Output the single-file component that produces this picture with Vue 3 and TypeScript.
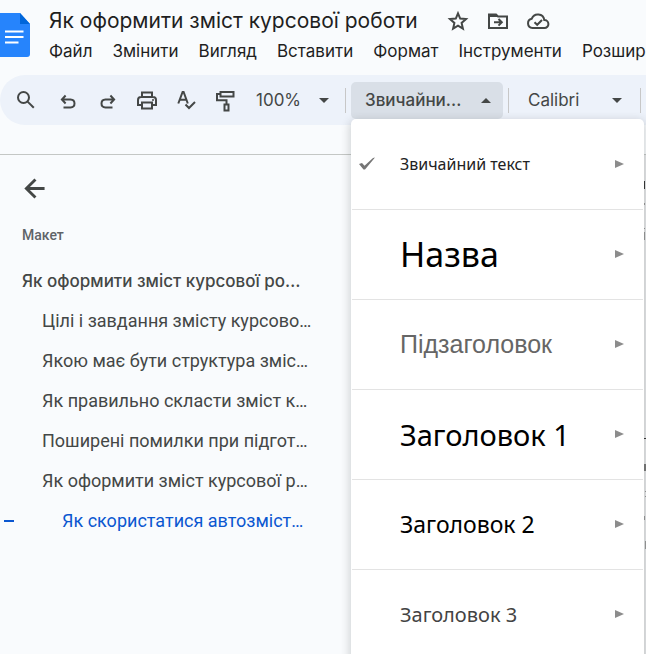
<script setup lang="ts">
import { ref } from 'vue'

interface StyleOption {
  label: string
  kind: string
}

interface OutlineItem {
  label: string
  level: number
  active?: boolean
}

const menuItems: string[] = ['Файл', 'Змінити', 'Вигляд', 'Вставити', 'Формат', 'Інструменти', 'Розширення']

const styleOptions: StyleOption[] = [
  { label: 'Звичайний текст', kind: 'normal' },
  { label: 'Назва', kind: 'title' },
  { label: 'Підзаголовок', kind: 'subtitle' },
  { label: 'Заголовок 1', kind: 'h1' },
  { label: 'Заголовок 2', kind: 'h2' },
  { label: 'Заголовок 3', kind: 'h3' },
]

const outline: OutlineItem[] = [
  { label: 'Як оформити зміст курсової ро…', level: 1 },
  { label: 'Цілі і завдання змісту курсово…', level: 2 },
  { label: 'Якою має бути структура зміс…', level: 2 },
  { label: 'Як правильно скласти зміст к…', level: 2 },
  { label: 'Поширені помилки при підгот…', level: 2 },
  { label: 'Як оформити зміст курсової р…', level: 2 },
  { label: 'Як скористатися автозміст…', level: 3, active: true },
]

const menuOpen = ref(true)
const selected = ref('normal')
</script>

<template>
  <div class="app">
    <header class="header">
      <svg class="logo" viewBox="0 0 31 44" aria-hidden="true">
        <path d="M-2 0H20L30 11V41Q30 44 27 44H-2Z" fill="#2684fc" />
        <path d="M20 0L30 11H20Z" fill="#0066da" />
        <path d="M5 18.500H23.500M5 24H23.500M5 29.500H18.500" stroke="#fff" stroke-width="2.200" />
      </svg>
      <div class="heading">
        <div class="title-row">
          <h1 class="doc-title">Як оформити зміст курсової роботи</h1>
          <button class="icon-button" aria-label="Позначити">
            <svg viewBox="0 0 24 24"><path d="M12 4.300l2.200 5.300 5.800.500-4.400 3.800 1.300 5.700-4.900-3-4.900 3 1.300-5.700-4.400-3.800 5.800-.500z" class="line" stroke-linejoin="miter" /></svg>
          </button>
          <button class="icon-button" aria-label="Перемістити">
            <svg viewBox="0 0 24 24"><path d="M3 5.500H10L12 7.500H21V19H3Z" class="line" /><path d="M3 5H10L12 8H3Z" fill="#444746" /><path d="M8 13.300H15.500M12.500 10L15.800 13.300L12.500 16.600" class="line" /></svg>
          </button>
          <button class="icon-button" aria-label="Стан документа">
            <svg viewBox="0 0 24 24"><path d="M6.500 19A4.700 4.700 0 0 1 5.800 9.700A6.500 6.500 0 0 1 18.300 11A4 4 0 0 1 18.500 19Z" class="line" /><path d="M8.500 13.200L11.200 15.800L16 11" class="line" /></svg>
          </button>
        </div>
        <nav class="menubar">
          <button v-for="item in menuItems" :key="item">{{ item }}</button>
        </nav>
      </div>
    </header>

    <div class="toolbar" role="toolbar">
      <div class="tools">
        <button class="icon-button" aria-label="Пошук">
          <svg viewBox="0 0 24 24"><circle cx="9.500" cy="9.500" r="5.500" class="line" /><path d="M13.600 13.600L19.800 19.800" class="line" /></svg>
        </button>
        <button class="icon-button" aria-label="Скасувати">
          <svg viewBox="0 0 24 24"><path d="M9.500 19.500H16.500Q20.500 19.300 20.500 15.500T16.500 11.500H8M11.600 7.500L7.900 11.500L11.600 15.500" class="line" /></svg>
        </button>
        <button class="icon-button" aria-label="Повторити">
          <svg viewBox="0 0 24 24"><path d="M18.500 19.500H11.500Q7.500 19.300 7.500 15.500T11.500 11.500H20M16.400 7.500L20.100 11.500L16.400 15.500" class="line" /></svg>
        </button>
        <button class="icon-button" aria-label="Друк">
          <svg viewBox="0 0 24 24"><path d="M8 8.500V4.500H18V8.500M8 17H4V12Q4 9 7 9H19Q22 9 22 12V17H18M8 14.500H18V20.500H8Z" class="line" /><circle cx="19" cy="12" r="1" fill="#444746" /></svg>
        </button>
        <button class="icon-button" aria-label="Правопис">
          <svg viewBox="0 0 24 24"><path d="M4.300 15.500L8.600 4H9.600L13.800 15.500M5.800 11.700H12.400M11.500 16.500L15 20L21 14" class="line" /></svg>
        </button>
        <button class="icon-button" aria-label="Копіювати формат">
          <svg viewBox="0 0 24 24"><path d="M6.500 4H19.500V8.500H6.500ZM6.500 6H3V12.200H12.500V16M10.500 16.500H14.500V22.500H10.500Z" class="line" /></svg>
        </button>
      </div>
      <button class="drop zoom">100%<i class="caret"></i></button>
      <span class="divider"></span>
      <div class="style-picker">
        <button class="drop style-button" aria-haspopup="menu" :aria-expanded="menuOpen" @click="menuOpen = !menuOpen">
          Звичайни...<i class="caret up"></i>
        </button>
        <div v-if="menuOpen" class="style-menu" role="menu">
          <button
            v-for="option in styleOptions"
            :key="option.kind"
            class="option"
            role="menuitemradio"
            :aria-checked="selected === option.kind"
            @click="selected = option.kind"
          >
            <span class="check">
              <svg v-if="selected === option.kind" viewBox="0 0 18 16"><path d="M1 8L4 7L6.500 9.800L15 2L17 1.500L7 13.500H5.500Z" fill="#757575" /></svg>
            </span>
            <span class="option-label" :class="option.kind">{{ option.label }}</span>
            <i class="arrow"></i>
          </button>
        </div>
      </div>
      <span class="divider"></span>
      <button class="drop font-button">Calibri<i class="caret"></i></button>
      <span class="divider"></span>
    </div>

    <main class="workspace">
      <aside class="sidebar">
        <button class="back" aria-label="Закрити макет">
          <svg viewBox="0 0 24 24"><path d="M22.500 12H3.500M13 2.500L3.500 12L13 21.500" class="line bold" /></svg>
        </button>
        <h2 class="caption">Макет</h2>
        <ul class="outline">
          <li v-for="item in outline" :key="item.label" :class="['level-' + item.level, { active: item.active }]">
            <a href="#">{{ item.label }}</a>
          </li>
        </ul>
      </aside>
      <svg class="page-edge" viewBox="0 1 2 500" preserveAspectRatio="xMidYMin slice" aria-hidden="true">
        <path fill="#e7e8ea" d="M0 0H2V501H0Z" />
        <path fill="#333" d="M0 27H1V35H0ZM0 284H2V285H0Z" />
        <path fill="#777" d="M0 310H2V317H0Z" />
        <path fill="#999" d="M0 49H1V51H0ZM0 74H1V75H0ZM0 78H1V86H0ZM1 337H2V338H1ZM1 342H2V343H1ZM0 362H1V366H0ZM1 387H2V395H1Z" />
      </svg>
    </main>
  </div>
</template>

<style>
body {
  margin: 0;
  background: #f9fbfd;
}
</style>

<style scoped>
.app {
  display: flex;
  flex-direction: column;
  height: 100vh;
  overflow: hidden;
  background: #f9fbfd;
  color: #1f1f1f;
  font-family: Inter, Roboto, sans-serif;
}

button {
  margin: 0;
  padding: 0;
  border: 0;
  background: none;
  color: inherit;
  font: inherit;
  white-space: nowrap;
  cursor: pointer;
}

svg {
  display: block;
}

.line {
  fill: none;
  stroke: #444746;
  stroke-width: 2;
}

.line.bold {
  stroke-width: 3;
}

.header {
  display: flex;
  align-items: flex-start;
  flex: none;
  height: 75px;
}

.logo {
  flex: none;
  width: 31px;
  height: 44px;
  margin-top: 13px;
}

.heading {
  flex: 1;
  min-width: 0;
  margin-left: 18px;
}

.title-row {
  display: flex;
  align-items: center;
  gap: 16px;
  height: 42px;
}

.doc-title {
  margin: 0 12px 0 0;
  font-size: 21px;
  font-weight: 400;
  line-height: 42px;
  white-space: nowrap;
}

.icon-button svg {
  width: 24px;
  height: 24px;
}

.menubar {
  display: flex;
  gap: 20px;
  font-size: 17px;
  line-height: 18px;
}

.toolbar {
  display: flex;
  align-items: center;
  flex: none;
  height: 50px;
  border-radius: 25px 0 0 25px;
  background: #edf2fa;
  color: #444746;
  font-size: 17px;
}

.tools {
  display: flex;
  gap: 16px;
  padding-left: 14px;
}

.drop {
  display: flex;
  align-items: center;
  justify-content: space-between;
  flex: none;
  height: 37px;
}

.zoom {
  width: 73px;
  margin: 0 16px 0 18px;
}

.divider {
  flex: none;
  width: 1px;
  height: 25px;
  background: #c7c7c7;
}

.caret {
  border: 5px solid transparent;
  border-top-color: #444746;
  border-bottom: 0;
}

.caret.up {
  border-top: 0;
  border-bottom: 5px solid #444746;
}

.style-picker {
  position: relative;
  flex: none;
  margin: 0 5px;
}

.style-button {
  width: 152px;
  padding: 0 12px 0 14px;
  border-radius: 5px;
  background: #d9dfe7;
  font-weight: 500;
}

.font-button {
  width: 94px;
  margin: 0 18px 0 19px;
}

.style-menu {
  position: absolute;
  z-index: 2;
  top: 37px;
  left: 0;
  width: 293px;
  padding: 1px 0 12px;
  border-radius: 5px;
  background: #fff;
  box-shadow: 0 3px 8px 2px rgba(60, 64, 67, 0.2);
}

.option {
  display: flex;
  align-items: center;
  width: calc(100% - 2px);
  height: 90px;
  margin: 0 1px;
  border-bottom: 1px solid #e3e3e3;
  text-align: left;
}

.check {
  flex: none;
  width: 48px;
}

.check svg {
  width: 18px;
  height: 16px;
  margin-left: 6px;
}

.option-label {
  flex: 1;
  color: #000;
  font-family: "Noto Sans", sans-serif;
}

.option-label.normal {
  color: #222;
  font-size: 16px;
}

.title {
  font-size: 34px;
}

.option-label.subtitle {
  color: #666;
  font-family: "Liberation Sans", Arial, sans-serif;
  font-size: 25px;
}

.h1 {
  font-size: 29px;
}

.h2 {
  font-size: 23px;
}

.option-label.h3 {
  color: #434343;
  font-size: 20px;
}

.arrow {
  margin-right: 19px;
  border: 4px solid transparent;
  border-left: 9px solid #8c8c8c;
  border-right: 0;
}

.workspace {
  display: flex;
  justify-content: space-between;
  flex: 1;
  min-height: 0;
  margin-top: 29px;
  border-top: 1px solid #c4c7c5;
}

.sidebar {
  flex: 1;
  min-width: 0;
  font-family: Roboto, sans-serif;
}

.back {
  display: block;
  margin: 22px 0 0 23px;
}

.back svg {
  width: 23px;
  height: 23px;
}

.caption {
  margin: 24px 0 15px 22px;
  color: #5f6368;
  font-size: 14px;
  font-weight: 500;
  line-height: 22px;
}

.outline {
  margin: 0;
  padding: 0;
  list-style: none;
  color: #444746;
  font-size: 18px;
  line-height: 40px;
}

.outline a {
  color: inherit;
  text-decoration: none;
  white-space: nowrap;
}

.level-1 {
  padding-left: 22px;
  font-family: Inter, Roboto, sans-serif;
  font-size: 17px;
  font-weight: 500;
}

.level-2 {
  padding-left: 42px;
}

.level-3 {
  display: flex;
  align-items: center;
  padding-left: 4px;
}

.level-3::before {
  width: 10px;
  height: 2px;
  margin-right: 48px;
  background: transparent;
  content: "";
}

.active {
  color: #0b57d0;
}

.active::before {
  background: #0b57d0;
}

.page-edge {
  flex: none;
  width: 2px;
  height: 500px;
}
</style>
